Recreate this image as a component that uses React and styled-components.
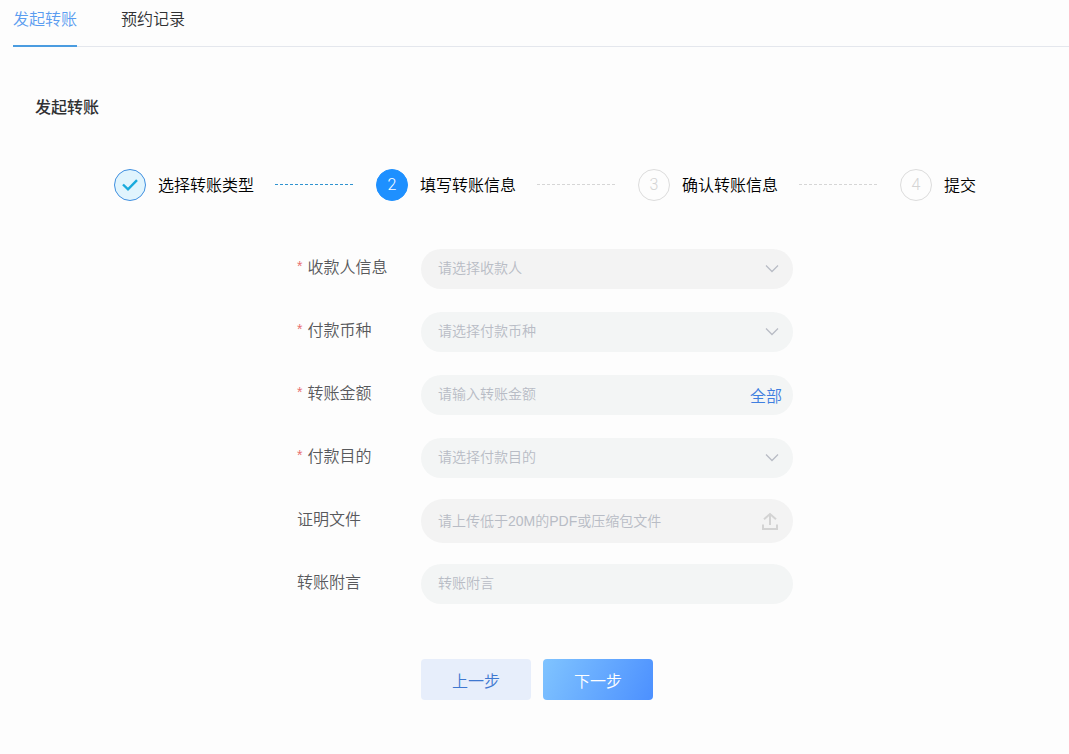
import React, { useState } from 'react';
import styled, { createGlobalStyle, css } from 'styled-components';

const GlobalStyle = createGlobalStyle`
  * {
    box-sizing: border-box;
  }
  body {
    margin: 0;
    background: #fdfdfd;
    color: #000;
    font-family: "Liberation Sans", "Noto Sans CJK SC", sans-serif;
    font-size: 16px;
    font-weight: 350;
  }
  button, input, select {
    font: inherit;
  }
`;

const Tabs = styled.nav`
  display: flex;
  gap: 44px;
  height: 47px;
  margin-left: 13px;
  border-bottom: 1px solid #e4e7ed;
`;

const Tab = styled.a`
  height: 47px;
  line-height: 40px;
  color: ${props => (props.$active ? '#5a9cf0' : '#303133')};
  border-bottom: 2px solid ${props => (props.$active ? '#4a9ce0' : 'transparent')};
  text-decoration: none;
`;

const Page = styled.main`
  padding: 48px 0 48px 21px;
`;

const Title = styled.h1`
  margin: 0 0 48px 14px;
  color: #303133;
  font-size: 16px;
  font-weight: 500;
  line-height: 26px;
`;

const Steps = styled.ol`
  display: flex;
  justify-content: center;
  gap: 21px;
  margin: 0 0 46px;
  padding: 0;
  list-style: none;
`;

const Step = styled.li`
  display: flex;
  gap: 12px;
  line-height: 34px;
  white-space: nowrap;
`;

const circleStates = {
  done: css`
    background: #e0f4fd;
    border-color: #3f8fe0;
    color: #18aadc;
  `,
  active: css`
    background: #1e90ff;
    border-color: #1e90ff;
    color: #fff;
  `,
  wait: css`
    border-color: #dcdcdc;
    color: #d4d4d4;
  `
};

const Circle = styled.span`
  display: flex;
  justify-content: center;
  align-items: center;
  width: 32px;
  height: 32px;
  border: 1px solid;
  border-radius: 50%;
  font-family: Roboto, sans-serif;
  ${props => circleStates[props.$state]}
`;

const Dashes = styled.li`
  width: 80px;
  height: 1px;
  margin-top: 15px;
  background: repeating-linear-gradient(
    to right,
    ${props => (props.$done ? '#2f93d0' : '#d6d6d6')} 0 3px,
    transparent 3px 5px
  );
`;

const Form = styled.form`
  display: flex;
  flex-direction: column;
  gap: 23px;
  max-width: 496px;
  margin: 0 auto;
`;

const Row = styled.div`
  display: grid;
  grid-template-columns: 124px 1fr;
  grid-template-rows: 40px;
  align-items: center;
`;

const Label = styled.label`
  align-self: start;
  line-height: 38px;
  color: #58595c;
`;

const Star = styled.span`
  margin-right: 5px;
  color: #e87070;
  font-size: 14px;
  vertical-align: 2px;
  line-height: 1;
`;

const Field = styled.div`
  display: grid;
  grid-template-columns: 1fr auto;
  align-items: center;
  height: ${props => (props.$tall ? '44px' : '40px')};
  padding-right: 11px;
  border-radius: 22px;
  background: ${props => (props.$gray ? '#f3f3f3' : '#f3f5f5')};
  color: #b8bcc5;
  font-size: 14px;
`;

const control = css`
  grid-column: 1 / 3;
  grid-row: 1;
  width: 100%;
  height: 40px;
  padding: 0 0 2px 17px;
  border: 0;
  background: transparent;
  color: inherit;
`;

const Select = styled.select`
  ${control}
  appearance: none;
`;

const Input = styled.input`
  ${control}
  &::placeholder {
    color: #b8bcc5;
    opacity: 1;
  }
`;

const FileInput = styled.input`
  ${control}
  opacity: 0;
`;

const FileHint = styled.span`
  grid-column: 1 / 3;
  grid-row: 1;
  padding-left: 17px;
  line-height: 40px;
  pointer-events: none;
`;

const Icon = styled.svg`
  grid-column: 2;
  grid-row: 1;
  margin-right: 3px;
  fill: none;
  stroke: currentColor;
  pointer-events: none;
`;

const AllButton = styled.button`
  grid-column: 2;
  grid-row: 1;
  padding: 0;
  border: 0;
  background: none;
  color: #3f7fe0;
  font-size: 16px;
  cursor: pointer;
`;

const Actions = styled.div`
  display: flex;
  gap: 12px;
  margin: 32px 0 0 124px;
`;

const Button = styled.button`
  width: 110px;
  height: 41px;
  padding: 0;
  border: 0;
  border-radius: 4px;
  background: ${props => (props.$primary ? 'linear-gradient(115deg, #80c4ff, #4c90ff)' : '#e7eefb')};
  color: ${props => (props.$primary ? '#fff' : '#3f78d0')};
  cursor: pointer;
`;

const steps = ['选择转账类型', '填写转账信息', '确认转账信息', '提交'];

const fields = [
  { id: 'payee', label: '收款人信息', hint: '请选择收款人', type: 'select', required: true, gray: true },
  { id: 'currency', label: '付款币种', hint: '请选择付款币种', type: 'select', required: true },
  { id: 'amount', label: '转账金额', hint: '请输入转账金额', type: 'amount', required: true },
  { id: 'purpose', label: '付款目的', hint: '请选择付款目的', type: 'select', required: true },
  { id: 'proof', label: '证明文件', hint: '请上传低于20M的PDF或压缩包文件', type: 'file', gray: true },
  { id: 'remark', label: '转账附言', hint: '转账附言', type: 'text' }
];

const Check = () => (
  <svg width="18" height="14" viewBox="0 0 18 14" fill="none" stroke="currentColor" strokeWidth="2.4">
    <path d="M2 6.5 L7 11.3 L16 2.2" />
  </svg>
);

const Chevron = () => (
  <Icon width="14" height="10" viewBox="0 0 14 10" strokeWidth="1.3" aria-hidden="true">
    <path d="M1 1.5 L7 7.5 L13 1.5" />
  </Icon>
);

const Upload = () => (
  <Icon width="18" height="18" viewBox="0 0 18 18" strokeWidth="2" color="#d3d3d3" aria-hidden="true">
    <path d="M9 13 V2 M3 7.2 L9 2 L15 7.2 M2 12.5 V17 H16 V12.5" />
  </Icon>
);

function FormRow({ field }) {
  const { id, label, hint, type, required, gray } = field;
  const [fileName, setFileName] = useState('');

  return (
    <Row>
      <Label htmlFor={id}>
        {required && <Star>*</Star>}
        {label}
      </Label>
      <Field $gray={gray} $tall={type === 'file'}>
        {type === 'select' && (
          <>
            <Select id={id} defaultValue="">
              <option value="">{hint}</option>
            </Select>
            <Chevron />
          </>
        )}
        {type === 'file' && (
          <>
            <FileInput
              id={id}
              type="file"
              onChange={e => setFileName(e.target.files[0] ? e.target.files[0].name : '')}
            />
            <FileHint>{fileName || hint}</FileHint>
            <Upload />
          </>
        )}
        {(type === 'text' || type === 'amount') && <Input id={id} type="text" placeholder={hint} />}
        {type === 'amount' && <AllButton type="button">全部</AllButton>}
      </Field>
    </Row>
  );
}

export default function App() {
  const current = 1;

  return (
    <>
      <GlobalStyle />
      <Tabs>
        <Tab href="#transfer" $active>发起转账</Tab>
        <Tab href="#records">预约记录</Tab>
      </Tabs>
      <Page>
        <Title>发起转账</Title>
        <Steps>
          {steps.map((name, i) => (
            <React.Fragment key={name}>
              {i > 0 && <Dashes $done={i <= current} aria-hidden="true" />}
              <Step>
                <Circle $state={i < current ? 'done' : i === current ? 'active' : 'wait'}>
                  {i < current ? <Check /> : i + 1}
                </Circle>
                {name}
              </Step>
            </React.Fragment>
          ))}
        </Steps>
        <Form onSubmit={e => e.preventDefault()}>
          {fields.map(field => <FormRow key={field.id} field={field} />)}
          <Actions>
            <Button type="button">上一步</Button>
            <Button type="submit" $primary>下一步</Button>
          </Actions>
        </Form>
      </Page>
    </>
  );
}
